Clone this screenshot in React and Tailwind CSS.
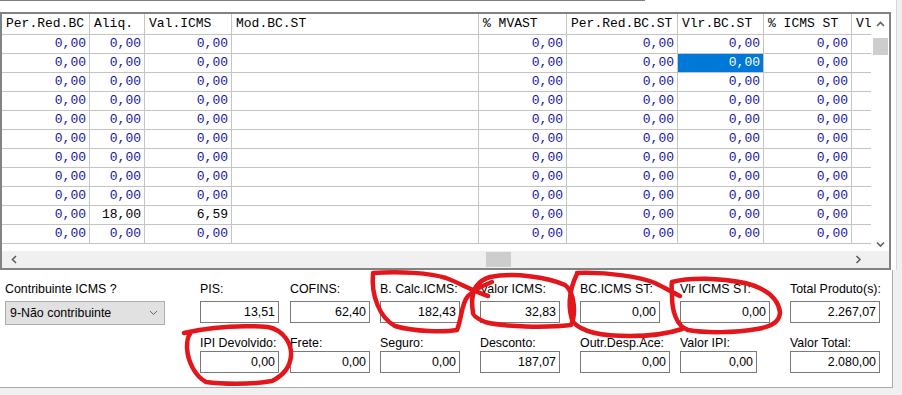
import React from "react";

const COLS = [
  { h: "Per.Red.BC", w: "w-[88px]" },
  { h: "Aliq.", w: "w-[55px]" },
  { h: "Val.ICMS", w: "w-[87px]" },
  { h: "Mod.BC.ST", w: "w-[247px]", empty: true },
  { h: "% MVAST", w: "w-[88px]" },
  { h: "Per.Red.BC.ST", w: "w-[111px]" },
  { h: "Vlr.BC.ST", w: "w-[86px]" },
  { h: "% ICMS ST", w: "w-[88px]" },
  { h: "Vl", w: "w-[19px]", empty: true, last: true },
];

const ROWS = Array.from({ length: 11 }, (_, i) =>
  i === 9
    ? ["0,00", "18,00", "6,59", "", "0,00", "0,00", "0,00", "0,00", ""]
    : ["0,00", "0,00", "0,00", "", "0,00", "0,00", "0,00", "0,00", ""]
);

function Chevron({ dir }) {
  const d = {
    up: "M1 5 L4.5 1.5 L8 5",
    down: "M1 1.5 L4.5 5 L8 1.5",
    left: "M5 1 L1.5 4.5 L5 8",
    right: "M1.5 1 L5 4.5 L1.5 8",
  }[dir];
  const vert = dir === "up" || dir === "down";
  return (
    <svg width={vert ? 9 : 7} height={vert ? 7 : 9} viewBox={vert ? "0 0 9 7" : "0 0 7 9"}>
      <path d={d} fill="none" stroke="#606060" strokeWidth="1.6" />
    </svg>
  );
}

function Grid() {
  return (
    <div className="w-[891px] h-[258px] border-2 border-[#828282] bg-white flex flex-col">
      <div className="flex h-[237px]">
        <div className="w-[869px] overflow-hidden font-['Liberation_Mono',monospace] text-[13px]">
          {/* Header */}
          <div className="flex h-[21px]">
            {COLS.map((c) => (
              <div
                key={c.h}
                className={`${c.w} shrink-0 h-[21px] leading-[20px] pl-[4px] whitespace-pre overflow-hidden text-black border-b border-[#c4c4c4] ${c.last ? "" : "border-r"}`}
              >
                {c.h}
              </div>
            ))}
          </div>
          {/* Rows */}
          {ROWS.map((r, ri) => (
            <div key={ri} className="flex h-[19px]">
              {COLS.map((c, ci) => {
                const sel = ri === 1 && ci === 6;
                const v = r[ci];
                return (
                  <div
                    key={ci}
                    className={`${c.w} shrink-0 h-[19px] leading-[18px] pr-[3px] text-right border-b border-[#c4c4c4] ${c.last ? "" : "border-r"} ${sel ? "bg-[#0078d7] text-white" : v === "0,00" ? "text-[#1414a0]" : "text-black"}`}
                  >
                    {v}
                  </div>
                );
              })}
            </div>
          ))}
        </div>
        {/* Vertical scrollbar */}
        <div className="w-[18px] flex flex-col items-center bg-white">
          <div className="h-[24px] flex items-center justify-center pb-[4px]">
            <Chevron dir="up" />
          </div>
          <div className="w-[15px] h-[17px] bg-[#cdcdcd]" />
          <div className="flex-1" />
          <div className="h-[17px] flex items-center justify-center pt-[4px]">
            <Chevron dir="down" />
          </div>
        </div>
      </div>
      <div className="h-[17px] bg-[#f0f0f0] flex items-center">
        <div className="w-[17px] flex justify-center ml-[4px]">
          <Chevron dir="left" />
        </div>
        <div className="w-[463px]" />
        <div className="w-[25px] h-[15px] bg-[#cdcdcd]" />
        <div className="flex-1" />
        <div className="w-[17px] flex justify-center mr-[22px]">
          <Chevron dir="right" />
        </div>
      </div>
    </div>
  );
}

function Field({ label, value, w = "w-[80px]", top }) {
  return (
    <div className="flex flex-col">
      <div className={`h-[14px] leading-[14px] whitespace-nowrap text-black ${top ? "" : "mt-[13px]"}`}>{label}</div>
      <div
        className={`${w} h-[22px] border border-[#7a7a7a] bg-white text-right pr-[3px] leading-[20px] text-black ${top ? "mt-[5px]" : "mt-[1px]"}`}
      >
        {value}
      </div>
    </div>
  );
}

function Annotations() {
  return (
    <svg className="absolute left-0 top-0 pointer-events-none" width="902" height="395" viewBox="0 0 902 395">
      <g fill="none" stroke="#e3161b" strokeWidth="4.5" strokeLinecap="round" strokeLinejoin="round">
        {/* B. Calc.ICMS */}
        <path d="M373 273 C 400 271 430 273 446 278 C 462 284 472 291 488 296" />
        <path d="M373 274 C 371 296 380 318 395 326 C 415 332 445 332 457 330 C 462 318 461 304 468 296 C 474 290 484 285 492 282" />
        {/* Valor ICMS */}
        <path d="M473 312 C 470 295 474 282 490 277 C 515 272 550 278 565 285 C 575 292 576 315 571 325 C 545 328 505 327 485 322 C 476 318 472 315 473 312" />
        {/* BC.ICMS ST */}
        <path d="M577 273 C 610 272 640 277 655 283 C 665 288 672 292 680 296" />
        <path d="M577 274 C 568 292 568 310 573 322 C 582 332 600 336 630 336 C 655 336 670 333 682 329" />
        {/* Vlr ICMS ST */}
        <path d="M672 282 C 690 277 720 278 745 283 C 765 288 778 298 780 312 C 780 322 770 327 757 329 C 735 333 705 333 688 330 C 676 326 672 310 672 296 C 672 290 671 286 672 282" />
        {/* IPI Devolvido */}
        <path d="M184 333 C 210 327 240 325 268 327 C 283 330 292 343 291 356 C 290 368 282 376 272 381 C 250 385 220 384 206 382 C 195 376 188 362 187 348 C 187 341 188 336 190 334" />
      </g>
    </svg>
  );
}

export default function App() {
  return (
    <div className="relative w-[902px] h-[395px] bg-[#f0f0f0] overflow-hidden font-['Liberation_Sans',Arial,sans-serif] text-[12.4px]">
      <div className="w-[897px] bg-white border-r border-[#d7d7d7]">
        {/* Top strip */}
        <div className="h-[12px]">
          <div className="w-[645px] h-[1px] bg-[#7f7f7f]" />
        </div>
        <Grid />
      </div>

      {/* Form panel */}
      <div className="w-[893px] h-[118px] bg-white border-r border-b border-[#a9a9a9] flex">
        <div className="ml-[5px] w-[160px] flex flex-col">
          <div className="h-[14px] leading-[14px] mt-[12px] whitespace-nowrap text-black">Contribuinte ICMS ?</div>
          <div className="mt-[5px] h-[24px] border border-[#adadad] bg-[#e1e1e1] flex items-center justify-between pl-[4px] pr-[6px] text-black">
            <span>9-Não contribuinte</span>
            <svg width="9" height="6" viewBox="0 0 9 6">
              <path d="M1 1 L4.5 4.5 L8 1" fill="none" stroke="#606060" strokeWidth="1" />
            </svg>
          </div>
        </div>
        <div className="ml-[35px] w-[80px] flex flex-col pt-[12px]">
          <Field top label="PIS:" value="13,51" w="w-[79px]" />
          <Field label="IPI Devolvido:" value="0,00" w="w-[79px]" />
        </div>
        <div className="ml-[10px] w-[80px] flex flex-col pt-[12px]">
          <Field top label="COFINS:" value="62,40" />
          <Field label="Frete:" value="0,00" />
        </div>
        <div className="ml-[10px] w-[80px] flex flex-col pt-[12px]">
          <Field top label="B. Calc.ICMS:" value="182,43" />
          <Field label="Seguro:" value="0,00" />
        </div>
        <div className="ml-[20px] w-[80px] flex flex-col pt-[12px]">
          <Field top label="Valor ICMS:" value="32,83" />
          <Field label="Desconto:" value="187,07" />
        </div>
        <div className="ml-[20px] w-[90px] flex flex-col pt-[12px]">
          <Field top label="BC.ICMS ST:" value="0,00" />
          <Field label="Outr.Desp.Ace:" value="0,00" w="w-[90px]" />
        </div>
        <div className="ml-[10px] w-[90px] flex flex-col pt-[12px]">
          <Field top label="Vlr ICMS ST:" value="0,00" w="w-[90px]" />
          <Field label="Valor IPI:" value="0,00" w="w-[77px]" />
        </div>
        <div className="ml-[20px] w-[90px] flex flex-col pt-[12px]">
          <Field top label="Total Produto(s):" value="2.267,07" w="w-[90px]" />
          <Field label="Valor Total:" value="2.080,00" w="w-[90px]" />
        </div>
      </div>

      <Annotations />
    </div>
  );
}
